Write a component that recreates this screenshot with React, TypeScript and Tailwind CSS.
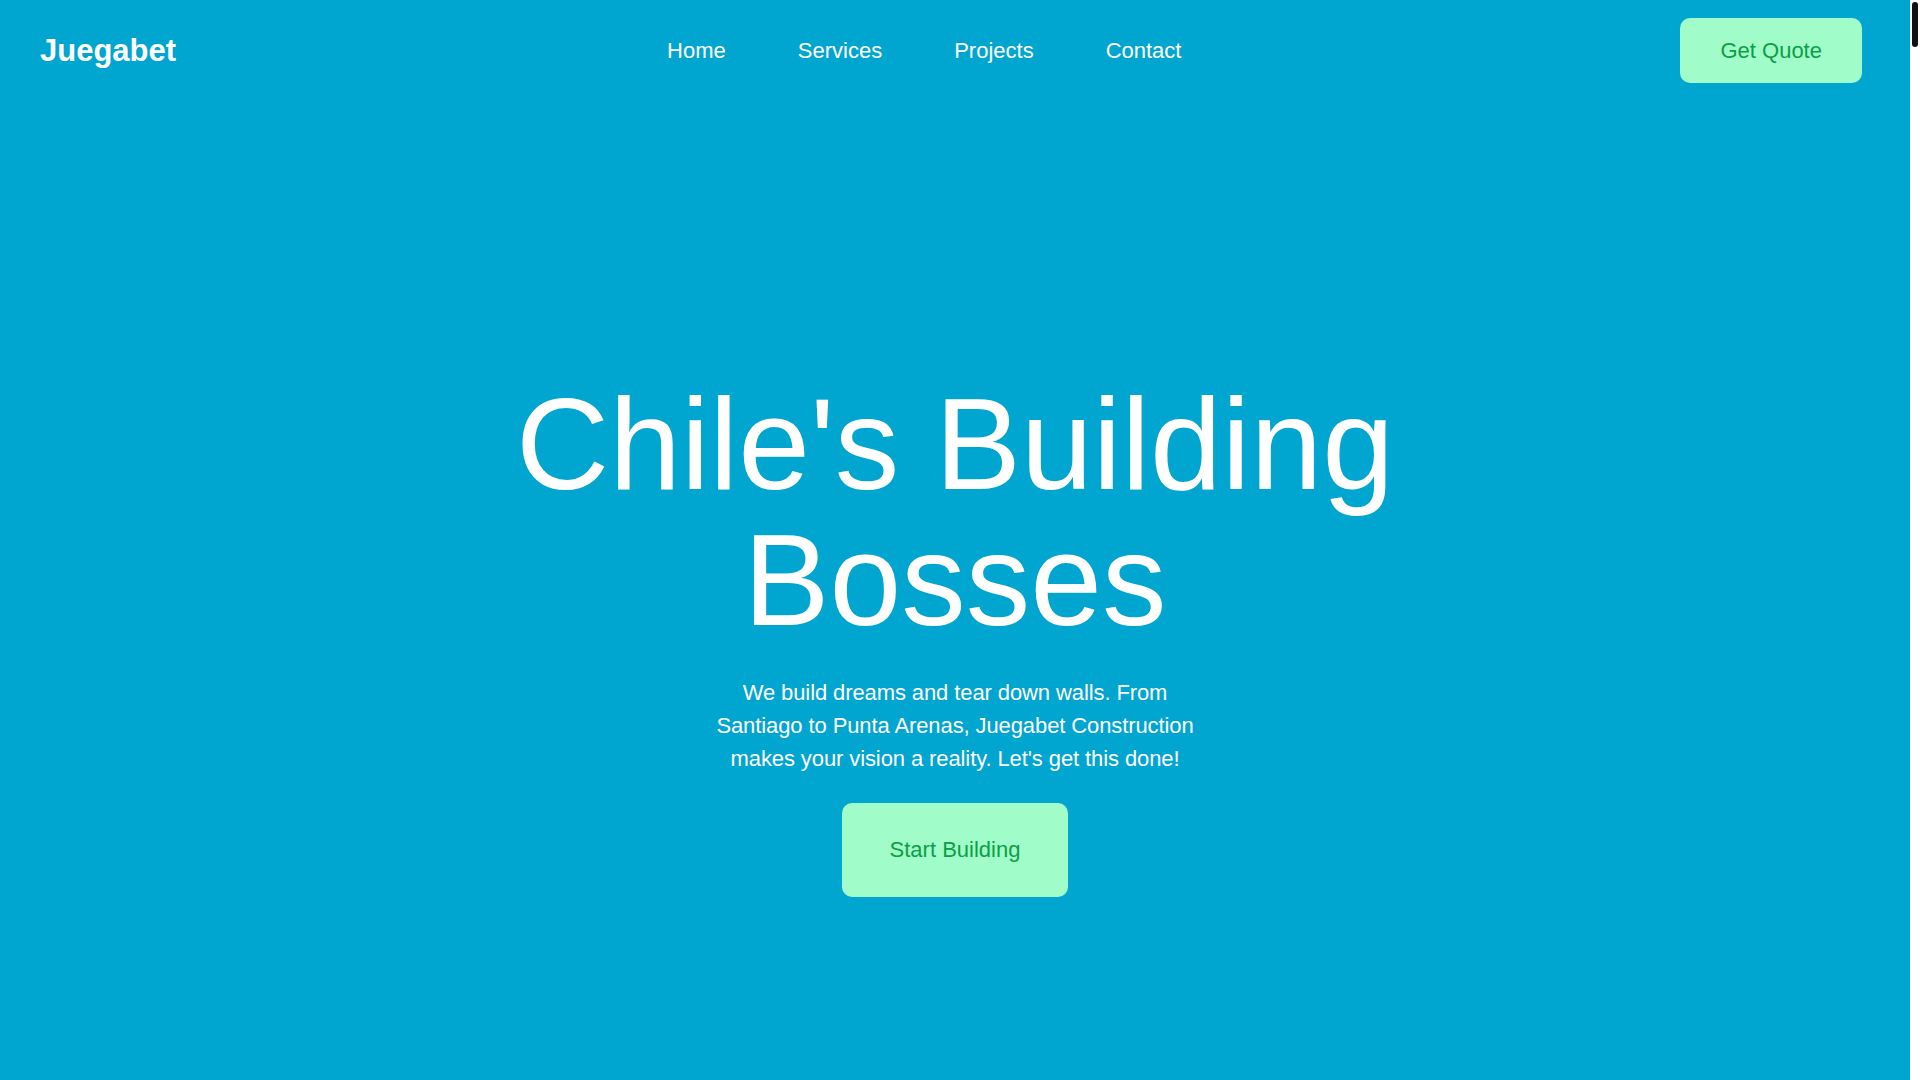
import React from 'react';

const NAV_LINKS = ['Home', 'Services', 'Projects', 'Contact'];

const SERVICES = [
  { title: 'Residential Builds', text: 'Houses and apartments built to last, from foundations to finishing touches.' },
  { title: 'Commercial Projects', text: 'Offices, shops and warehouses delivered on time and on budget.' },
  { title: 'Renovations', text: 'We tear down the old walls and put up something better.' },
];

const PROJECTS = ['Torre Providencia', 'Casa Valparaíso', 'Centro Puerto Montt', 'Bodega Antofagasta'];

// thin custom scroll rail pinned to the right edge
function ScrollRail() {
  return (
    <div className="fixed top-0 right-0 h-screen w-[10px] bg-white">
      <div className="absolute top-[2px] left-[2px] w-[6px] h-[45px] rounded-full bg-[#111]" />
    </div>
  );
}

export default function App() {
  return (
    <div className="pr-[10px] bg-white font-['Liberation_Sans',Arial,sans-serif] text-white">
      <ScrollRail />
      <div className="bg-[#00a5d0]">
        {/* Nav */}
        <nav className="flex items-center justify-between pl-10 pr-12 py-[18px]">
          <a href="#" className="text-[31px] font-bold leading-none">Juegabet</a>
          <div className="flex items-center gap-[72px] text-[22px] mr-2">
            {NAV_LINKS.map(l => (
              <a key={l} href="#" className="hover:text-[#a0fdc9] transition">{l}</a>
            ))}
          </div>
          <button className="px-10 py-5 rounded-[10px] bg-[#a0fdc9] text-[#0b9f47] text-[22px] leading-[25px]">
            Get Quote
          </button>
        </nav>

        {/* Hero */}
        <section className="min-h-screen flex flex-col items-center justify-center text-center px-6 pb-[8px]">
          <h1 className="max-w-[1000px] text-[129px] leading-[1.05] font-normal">Chile's Building Bosses</h1>
          <p className="mt-[28px] max-w-[500px] text-[22px] leading-[33px] tracking-[-0.1px]">
            We build dreams and tear down walls. From Santiago to Punta Arenas, Juegabet Construction makes your vision a reality. Let's get this done!
          </p>
          <button className="mt-7 px-12 py-[34px] leading-[26px] rounded-[10px] bg-[#a0fdc9] text-[#0b9f47] text-[22px]">
            Start Building
          </button>
        </section>

        {/* Services */}
        <section className="min-h-screen px-10 py-24">
          <h2 className="text-6xl text-center mb-16">Services</h2>
          <div className="grid grid-cols-3 gap-8 max-w-6xl mx-auto">
            {SERVICES.map(s => (
              <div key={s.title} className="bg-white/10 rounded-[10px] p-10">
                <h3 className="text-3xl font-bold mb-4">{s.title}</h3>
                <p className="text-[22px] leading-[33px]">{s.text}</p>
              </div>
            ))}
          </div>
        </section>

        {/* Projects */}
        <section className="min-h-screen px-10 py-24">
          <h2 className="text-6xl text-center mb-16">Projects</h2>
          <div className="grid grid-cols-2 gap-8 max-w-6xl mx-auto">
            {PROJECTS.map(p => (
              <div key={p} className="h-72 bg-white/10 rounded-[10px] flex items-end p-8 text-3xl">{p}</div>
            ))}
          </div>
        </section>

        {/* Contact */}
        <section className="min-h-screen px-10 py-24 flex flex-col items-center">
          <h2 className="text-6xl mb-8">Contact</h2>
          <p className="text-[22px] leading-[33px] mb-10">Tell us what you want built.</p>
          <button className="px-12 py-[34px] leading-[26px] rounded-[10px] bg-[#a0fdc9] text-[#0b9f47] text-[22px]">
            Get Quote
          </button>
        </section>

        <footer className="px-10 py-10 text-center text-lg">© Juegabet Construction</footer>
      </div>
    </div>
  );
}
